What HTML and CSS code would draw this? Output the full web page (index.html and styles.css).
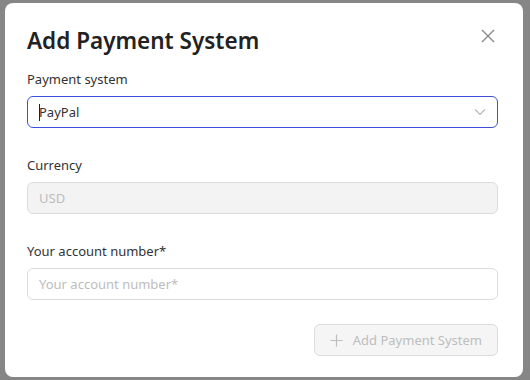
FILE: index.html
```html
<!DOCTYPE html>
<html lang="en">
<head>
    <meta charset="UTF-8">
    <meta name="viewport" content="width=device-width, initial-scale=1.0">
    <title>Add Payment System</title>
    <link rel="stylesheet" href="styles.css">
</head>
<body>
    <div class="overlay">
        <div class="modal">
            <div class="modal-header">
                <h1>Add Payment System</h1>
                <button class="close" type="button" aria-label="Close">
                    <svg width="14" height="14" viewBox="0 0 14 14">
                        <path d="M1 1 L13 13 M13 1 L1 13" stroke="#8a8a8a" stroke-width="1.4" fill="none"/>
                    </svg>
                </button>
            </div>

            <form class="form">
                <div class="form-group">
                    <label for="system">Payment system</label>
                    <div class="select focused" id="system">
                        <span class="caret"></span><span>PayPal</span>
                        <svg class="chevron" width="12" height="8" viewBox="0 0 12 8">
                            <path d="M1 1.5 L6 6.5 L11 1.5" stroke="#b5b5b5" stroke-width="1.1" fill="none"/>
                        </svg>
                    </div>
                </div>

                <div class="form-group">
                    <label for="currency">Currency</label>
                    <input type="text" id="currency" value="USD" disabled>
                </div>

                <div class="form-group last">
                    <label for="account">Your account number*</label>
                    <input type="text" id="account" placeholder="Your account number*">
                </div>

                <div class="actions">
                    <button type="button" class="submit" disabled>
                        <svg width="13" height="13" viewBox="0 0 13 13">
                            <path d="M6.5 0.5 V12.5 M0.5 6.5 H12.5" stroke="#bdbdbd" stroke-width="1.2" fill="none"/>
                        </svg>
                        Add Payment System
                    </button>
                </div>
            </form>
        </div>
    </div>
</body>
</html>
```

FILE: styles.css
```css
* {
    box-sizing: border-box;
}
body {
    margin: 0;
    font-family: "Noto Sans", "Open Sans", Arial, sans-serif;
    background: #868686;
}
.overlay {
    width: 530px;
    height: 380px;
    padding: 3px 7px 3px 5px;
}
.modal {
    background: white;
    border-radius: 8px;
    height: 374px;
    padding: 22px 25px 0 22px;
}
.modal-header {
    display: flex;
    justify-content: space-between;
    align-items: flex-start;
}
h1 {
    margin: 0;
    font-size: 22.5px;
    line-height: 32px;
    font-weight: 600;
    color: #222;
}
.close {
    background: none;
    border: none;
    padding: 0;
    margin: 4px 3px 0 0;
    cursor: pointer;
    display: flex;
}
.form {
    margin-top: 12px;
}
.form-group {
    margin-bottom: 27px;
}
.form-group.last {
    margin-bottom: 24px;
}
label {
    display: block;
    font-size: 13px;
    line-height: 20px;
    color: #333;
    margin-bottom: 7px;
}
.select,
input {
    width: 100%;
    height: 32px;
    border: 1px solid #dcdcdc;
    border-radius: 6px;
    font-family: inherit;
    font-size: 13px;
    padding: 0 11px;
    color: #333;
    background: white;
}
.select {
    display: flex;
    align-items: center;
}
.select.focused {
    border-color: #3c50dc;
}
.caret {
    width: 1px;
    height: 17px;
    background: #222;
    margin-right: -1px;
}
.chevron {
    margin-left: auto;
    margin-right: 0;
}
input:disabled {
    background: #f3f3f3;
    color: #bdbdbd;
}
input::placeholder {
    color: #bdbdbd;
}
.actions {
    display: flex;
    justify-content: flex-end;
}
.submit {
    display: flex;
    align-items: center;
    gap: 10px;
    height: 32px;
    padding: 0 15px;
    border: 1px solid #dcdcdc;
    border-radius: 6px;
    background: #f5f5f5;
    color: #bdbdbd;
    font-family: inherit;
    font-size: 13px;
}
```
